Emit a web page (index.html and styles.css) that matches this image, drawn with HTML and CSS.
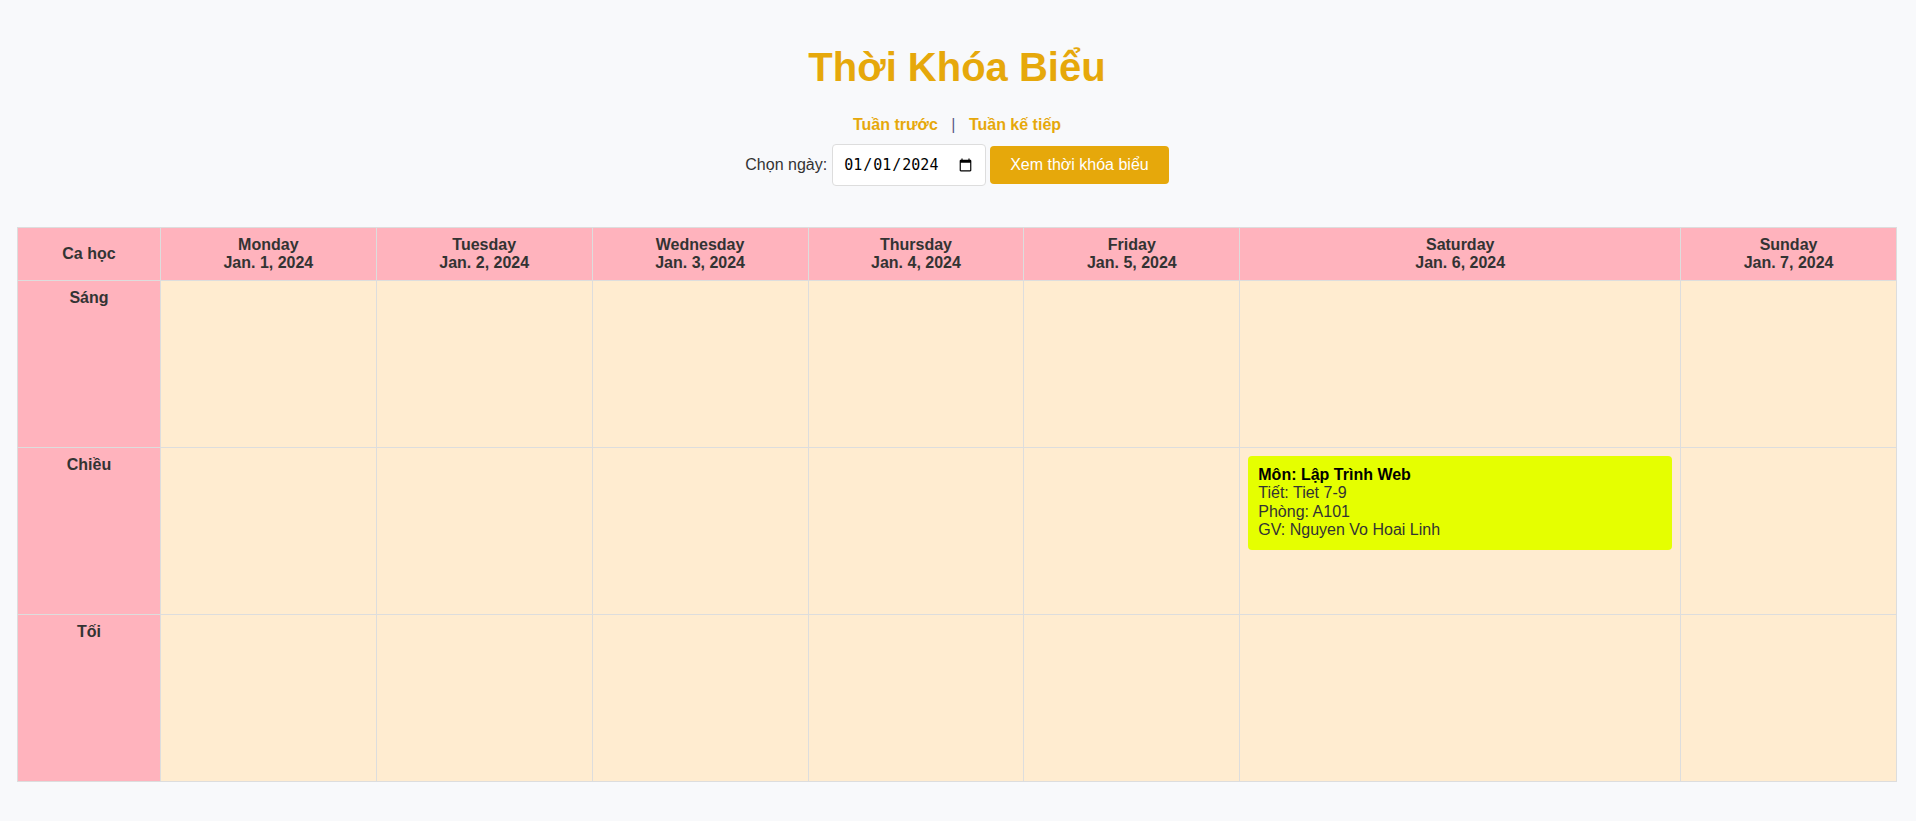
FILE: index.html
```html
<!DOCTYPE html>
<html lang="vi">
<head>
<meta charset="utf-8">
<title>Thời Khóa Biểu</title>
<link rel="stylesheet" href="styles.css">
</head>
<body>
<div class="page">
  <h1 class="title">Thời Khóa Biểu</h1>
  <div class="week-nav">
    <a class="week-link" href="#">Tuần trước</a>
    <span class="sep">|</span>
    <a class="week-link" href="#">Tuần kế tiếp</a>
  </div>
  <form class="date-form">
    <label class="date-label" for="d">Chọn ngày:</label>
    <input class="date-input" id="d" type="date" value="2024-01-01">
    <button class="view-btn" type="button">Xem thời khóa biểu</button>
  </form>
  <table class="schedule">
    <colgroup>
      <col class="c-ca">
      <col class="c-day">
      <col class="c-day">
      <col class="c-day">
      <col class="c-day">
      <col class="c-day">
      <col class="c-sat">
      <col class="c-day">
    </colgroup>
    <thead>
      <tr>
        <th>Ca học</th>
        <th>Monday<br>Jan. 1, 2024</th>
        <th>Tuesday<br>Jan. 2, 2024</th>
        <th>Wednesday<br>Jan. 3, 2024</th>
        <th>Thursday<br>Jan. 4, 2024</th>
        <th>Friday<br>Jan. 5, 2024</th>
        <th>Saturday<br>Jan. 6, 2024</th>
        <th>Sunday<br>Jan. 7, 2024</th>
      </tr>
    </thead>
    <tbody>
      <tr>
        <th class="shift">Sáng</th>
        <td></td><td></td><td></td><td></td><td></td><td></td><td></td>
      </tr>
      <tr>
        <th class="shift">Chiều</th>
        <td></td><td></td><td></td><td></td><td></td>
        <td>
          <div class="lesson">
            <div class="lesson-name">Môn: Lập Trình Web</div>
            <div>Tiết: Tiet 7-9</div>
            <div>Phòng: A101</div>
            <div>GV: Nguyen Vo Hoai Linh</div>
          </div>
        </td>
        <td></td>
      </tr>
      <tr>
        <th class="shift">Tối</th>
        <td></td><td></td><td></td><td></td><td></td><td></td><td></td>
      </tr>
    </tbody>
  </table>
</div>
</body>
</html>
```
FILE: styles.css
```css
html, body {
  margin: 0;
  padding: 0;
  background: #f8f9fb;
}
body {
  font-family: "Liberation Sans", Arial, sans-serif;
  font-size: 16px;
  color: #333;
}
.page {
  padding: 44px 19px 20px 17px;
}
.title {
  margin: 0 0 26px;
  font-size: 40px;
  line-height: 46px;
  font-weight: bold;
  color: #e6a80b;
  text-align: center;
}
.week-nav {
  text-align: center;
  font-weight: bold;
  line-height: 18px;
}
.week-link {
  color: #e6a80b;
  text-decoration: none;
}
.sep {
  color: #5a5a8a;
  font-weight: normal;
  margin: 0 9px;
}
.date-form {
  margin: 10px 0 41px;
  display: flex;
  justify-content: center;
  align-items: center;
  gap: 5px;
}
.date-label {
  color: #333;
}
.date-input {
  box-sizing: border-box;
  height: 42px;
  width: 154px;
  padding: 0 10px;
  border: 1px solid #ddd;
  border-radius: 4px;
  background: #fff;
  font-family: "DejaVu Sans Mono", monospace;
  font-size: 15px;
  color: #000;
}
.view-btn {
  margin-left: -1px;
  padding: 10px 20px;
  border: none;
  border-radius: 4px;
  background: #e6a80b;
  color: #fff;
  font-family: "Liberation Sans", Arial, sans-serif;
  font-size: 16px;
  line-height: 18px;
}
.schedule {
  width: 100%;
  table-layout: fixed;
  border-collapse: collapse;
}
.c-ca { width: 7.606%; }
.c-day { width: 11.489%; }
.c-sat { width: 23.46%; }
.schedule th,
.schedule td {
  border: 1px solid #dddddd;
  padding: 8px;
  line-height: 18px;
  vertical-align: top;
}
.schedule thead th {
  background: #ffb3bd;
  text-align: center;
  vertical-align: middle;
}
.schedule th {
  font-weight: bold;
  color: #333;
}
.schedule .shift {
  background: #ffb3bd;
  text-align: center;
  height: 150px;
}
.schedule td {
  background: #ffecd0;
}
.lesson {
  background: #e5ff00;
  border-radius: 4px;
  padding: 10px;
  line-height: 18.4px;
  color: #333;
}
.lesson-name {
  font-weight: bold;
  color: #000;
}
```
